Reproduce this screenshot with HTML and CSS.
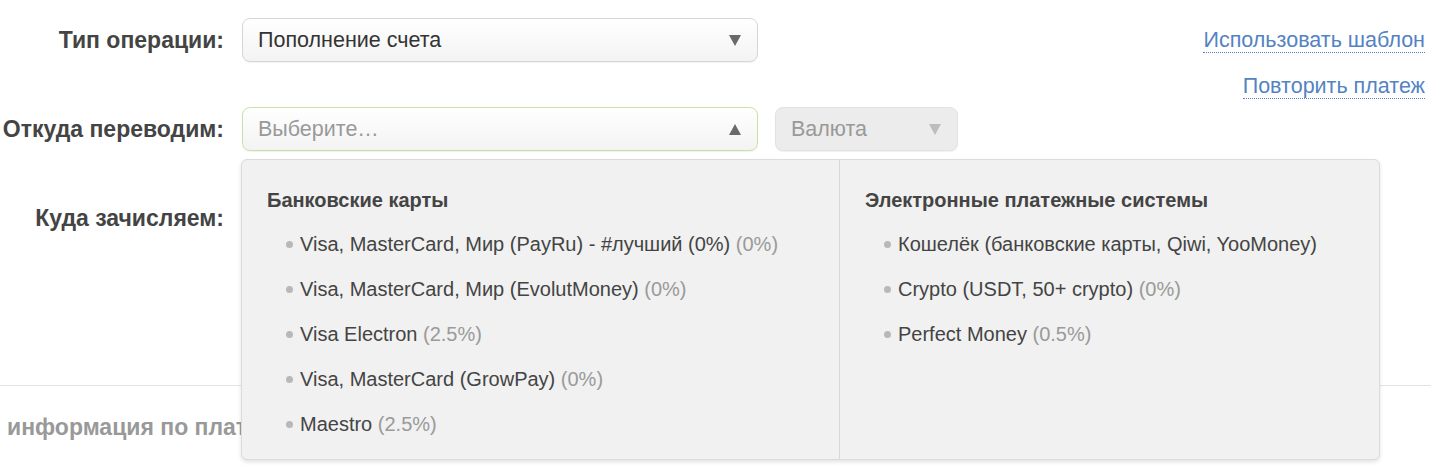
FILE: index.html
```html
<!DOCTYPE html>
<html lang="ru">
<head>
  <meta charset="UTF-8" />
  <meta name="viewport" content="width=device-width, initial-scale=1.0"/>
  <title>Пополнение счета</title>
  <link rel="stylesheet" href="styles.css">
</head>
<body>
  <div class="page">

    <!-- Форма платежа -->
    <section class="payment">
      <div class="payment-fields">

        <div class="row">
          <label class="row-label">Тип операции:</label>
          <div class="select select-wide">
            <span class="select-value">Пополнение счета</span>
            <span class="arrow arrow-down"></span>
          </div>
        </div>

        <div class="row row-open">
          <label class="row-label">Откуда переводим:</label>
          <div class="select-group">
            <div class="select select-wide select-active">
              <span class="select-value placeholder">Выберите…</span>
              <span class="arrow arrow-up"></span>
            </div>
            <div class="select select-small select-disabled">
              <span class="select-value placeholder">Валюта</span>
              <span class="arrow arrow-down"></span>
            </div>
          </div>

          <!-- Выпадающий список способов оплаты -->
          <div class="dropdown">
            <div class="dropdown-col">
              <h3>Банковские карты</h3>
              <ul>
                <li>Visa, MasterCard, Мир (PayRu) - #лучший (0%) <span class="fee">(0%)</span></li>
                <li>Visa, MasterCard, Мир (EvolutMoney) <span class="fee">(0%)</span></li>
                <li>Visa Electron <span class="fee">(2.5%)</span></li>
                <li>Visa, MasterCard (GrowPay) <span class="fee">(0%)</span></li>
                <li>Maestro <span class="fee">(2.5%)</span></li>
              </ul>
            </div>
            <div class="dropdown-col">
              <h3>Электронные платежные системы</h3>
              <ul>
                <li>Кошелёк (банковские карты, Qiwi, YooMoney)</li>
                <li>Crypto (USDT, 50+ crypto) <span class="fee">(0%)</span></li>
                <li>Perfect Money <span class="fee">(0.5%)</span></li>
              </ul>
            </div>
          </div>
        </div>

        <div class="row">
          <label class="row-label">Куда зачисляем:</label>
          <div class="select select-wide">
            <span class="select-value"></span>
          </div>
        </div>

        <div class="row">
          <label class="row-label"></label>
          <div class="select select-wide"></div>
        </div>
      </div>

      <div class="payment-links">
        <a href="#">Использовать шаблон</a>
        <a href="#">Повторить платеж</a>
      </div>
    </section>

    <section class="extra">
      <h2>информация по платежу</h2>
    </section>

  </div>
</body>
</html>
```

FILE: styles.css
```css
body {
  font-family: 'Liberation Sans', Arial, sans-serif;
  background: #fff;
  color: #444;
  margin: 0;
}

.page {
  width: 1431px;
  min-height: 471px;
  overflow: hidden;
}

.payment {
  display: flex;
  justify-content: space-between;
  padding: 18px 6px 0 0;
  border-bottom: 1px solid #e4e4e4;
  height: 367px;
}

.payment-fields {
  display: flex;
  flex-direction: column;
  gap: 45px;
}

.row {
  display: grid;
  grid-template-columns: 224px auto;
  column-gap: 18px;
  align-items: center;
  position: relative;
}

.row-label {
  text-align: right;
  font-size: 23px;
  font-weight: bold;
  color: #444;
  white-space: nowrap;
}

.select-group {
  display: flex;
  gap: 17px;
}

.select {
  box-sizing: border-box;
  height: 44px;
  display: flex;
  align-items: center;
  justify-content: space-between;
  padding: 0 15px;
  border: 1px solid #d6d6d6;
  border-radius: 8px;
  background: linear-gradient(#fff, #f3f3f3);
  box-shadow: 0 1px 1px rgba(0, 0, 0, 0.06);
}

.select-wide {
  width: 516px;
}

.select-small {
  width: 183px;
}

.select-active {
  border-color: #c8e2a4;
}

.select-disabled {
  background: #ececec;
  border-color: #e2e2e2;
}

.select-value {
  font-size: 21.5px;
  color: #333;
}

.placeholder {
  color: #999;
}

.arrow {
  width: 0;
  height: 0;
  border-left: 6px solid transparent;
  border-right: 6px solid transparent;
  margin-right: 1px;
}

.arrow-down {
  border-top: 11px solid #6a6a6a;
}

.arrow-up {
  border-bottom: 11px solid #6a6a6a;
}

.select-disabled .arrow-down {
  border-top-color: #bdbdbd;
}

/* выпадающий список */
.dropdown {
  position: absolute;
  top: 52px;
  left: 241px;
  width: 1139px;
  height: 301px;
  box-sizing: border-box;
  display: grid;
  grid-template-columns: 597px 1fr;
  grid-template-rows: 100%;
  background: #f0f1f0;
  border: 1px solid #dcdcdc;
  border-radius: 6px;
  box-shadow: 0 2px 4px rgba(0, 0, 0, 0.12);
  z-index: 10;
}

.dropdown-col {
  padding: 29px 25px 0;
  overflow: hidden;
}

.dropdown-col + .dropdown-col {
  border-left: 1px solid #d8d8d8;
}

.dropdown h3 {
  margin: 0 0 10px;
  font-size: 20px;
  line-height: 23px;
  font-weight: bold;
  color: #444;
}

.dropdown ul {
  list-style: none;
  margin: 0;
  padding: 0 0 0 19px;
}

.dropdown li {
  position: relative;
  padding-left: 14px;
  height: 45px;
  line-height: 45px;
  font-size: 20px;
  color: #444;
}

.dropdown li::before {
  content: '';
  position: absolute;
  left: 0;
  top: 19px;
  width: 7px;
  height: 7px;
  border-radius: 50%;
  background: #b8b8b8;
}

.fee {
  color: #9a9a9a;
}

.payment-links {
  display: flex;
  flex-direction: column;
  align-items: flex-end;
  gap: 21px;
  padding-top: 10px;
}

.payment-links a {
  font-size: 21.5px;
  color: #5383c2;
  text-decoration: none;
  border-bottom: 1px dotted #5383c2;
  line-height: 24px;
}

.extra h2 {
  margin: 28px 0 0 7px;
  font-size: 23px;
  font-weight: bold;
  color: #999;
}
```
